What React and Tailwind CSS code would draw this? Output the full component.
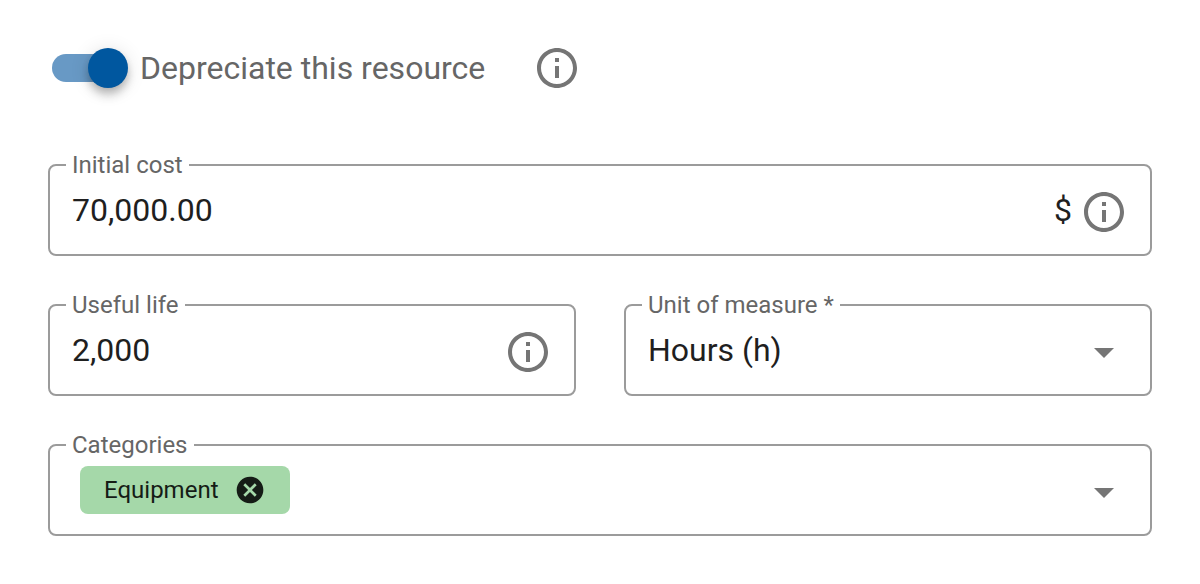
import { useState } from "react";
import { MdArrowDropDown, MdCancel, MdInfoOutline } from "react-icons/md";

function InfoButton({ label }) {
  return (
    <button type="button" aria-label={label} className="shrink-0 cursor-pointer text-[#757575]">
      <MdInfoOutline className="size-12" />
    </button>
  );
}

function Field({ id, label, children }) {
  return (
    <fieldset className="min-w-0 rounded-lg border-2 border-[#9b9b9b]">
      <legend className="ml-4 px-1.5 text-2xl leading-[26px] text-[#666666]">
        <label htmlFor={id} className="block">{label}</label>
      </legend>
      {children}
    </fieldset>
  );
}

function DepreciationSwitch() {
  const [on, setOn] = useState(true);
  return (
    <label className="flex cursor-pointer items-center">
      <input
        type="checkbox"
        role="switch"
        checked={on}
        onChange={(e) => setOn(e.target.checked)}
        className="peer sr-only"
      />
      <span className="flex h-7 w-[68px] items-center rounded-full bg-[#9e9e9e] peer-checked:bg-[#6899c5] peer-checked:*:ml-9">
        <span className="size-10 shrink-0 rounded-full bg-[#00579f] shadow-[0_4px_8px_-2px_rgba(0,0,0,0.2),0_8px_10px_rgba(0,0,0,0.14),0_2px_20px_rgba(0,0,0,0.12)]" />
      </span>
      <span className="ml-5 text-[32px] leading-10 text-[#666666]">Depreciate this resource</span>
    </label>
  );
}

export default function App() {
  const [cost, setCost] = useState("70,000.00");
  const [life, setLife] = useState("2,000");
  const [tags, setTags] = useState(["Equipment"]);

  return (
    <form className="flex flex-col bg-white px-12 py-12 font-[Roboto,sans-serif] text-[#1f1f1f]">
      <div className="flex h-10 items-center gap-12 pl-1">
        <DepreciationSwitch />
        <InfoButton label="About depreciation" />
      </div>

      <div className="mt-16 flex flex-col gap-9">
        <Field id="cost" label="Initial cost">
          <div className="flex h-[76px] items-center pr-[22px] pb-2 pl-[22px]">
            <input
              id="cost"
              value={cost}
              onChange={(e) => setCost(e.target.value)}
              className="h-10 min-w-0 flex-1 pb-1 text-[32px] leading-9 outline-none"
            />
            <span className="h-10 pb-1 text-[32px] leading-9">$</span>
            <span className="ml-2 flex">
              <InfoButton label="About initial cost" />
            </span>
          </div>
        </Field>

        <div className="grid grid-cols-2 gap-12">
          <Field id="life" label="Useful life">
            <div className="flex h-[76px] items-center pr-[22px] pb-2 pl-[22px]">
              <input
                id="life"
                value={life}
                onChange={(e) => setLife(e.target.value)}
                className="h-10 min-w-0 flex-1 pb-1 text-[32px] leading-9 outline-none"
              />
              <InfoButton label="About useful life" />
            </div>
          </Field>

          <Field id="unit" label="Unit of measure *">
            <div className="grid h-[76px] items-center pr-[22px] pb-2 pl-[22px]">
              <select
                id="unit"
                defaultValue="h"
                required
                className="col-start-1 row-start-1 h-10 w-full appearance-none pb-1 text-[32px] leading-9 outline-none"
              >
                <option value="h">Hours (h)</option>
                <option value="d">Days (d)</option>
              </select>
              <MdArrowDropDown
                aria-hidden="true"
                className="pointer-events-none col-start-1 row-start-1 size-12 justify-self-end text-[#757575]"
              />
            </div>
          </Field>
        </div>

        <Field id="categories" label="Categories">
          <div className="flex h-[76px] items-center pr-[22px] pb-2 pl-[30px]">
            {tags.map((tag) => (
              <span
                key={tag}
                className="mb-1 flex h-12 items-center gap-4 rounded-lg bg-[#a5d8a9] pr-6 pl-6 text-2xl text-[#151c16]"
              >
                {tag}
                <button
                  type="button"
                  aria-label={`Remove ${tag}`}
                  onClick={() => setTags(tags.filter((t) => t !== tag))}
                  className="cursor-pointer"
                >
                  <MdCancel className="size-8" />
                </button>
              </span>
            ))}
            <input id="categories" className="ml-2 h-10 min-w-0 flex-1 text-[32px] outline-none" />
            <button type="button" aria-label="Open categories" className="cursor-pointer text-[#757575]">
              <MdArrowDropDown className="size-12" />
            </button>
          </div>
        </Field>
      </div>
    </form>
  );
}
